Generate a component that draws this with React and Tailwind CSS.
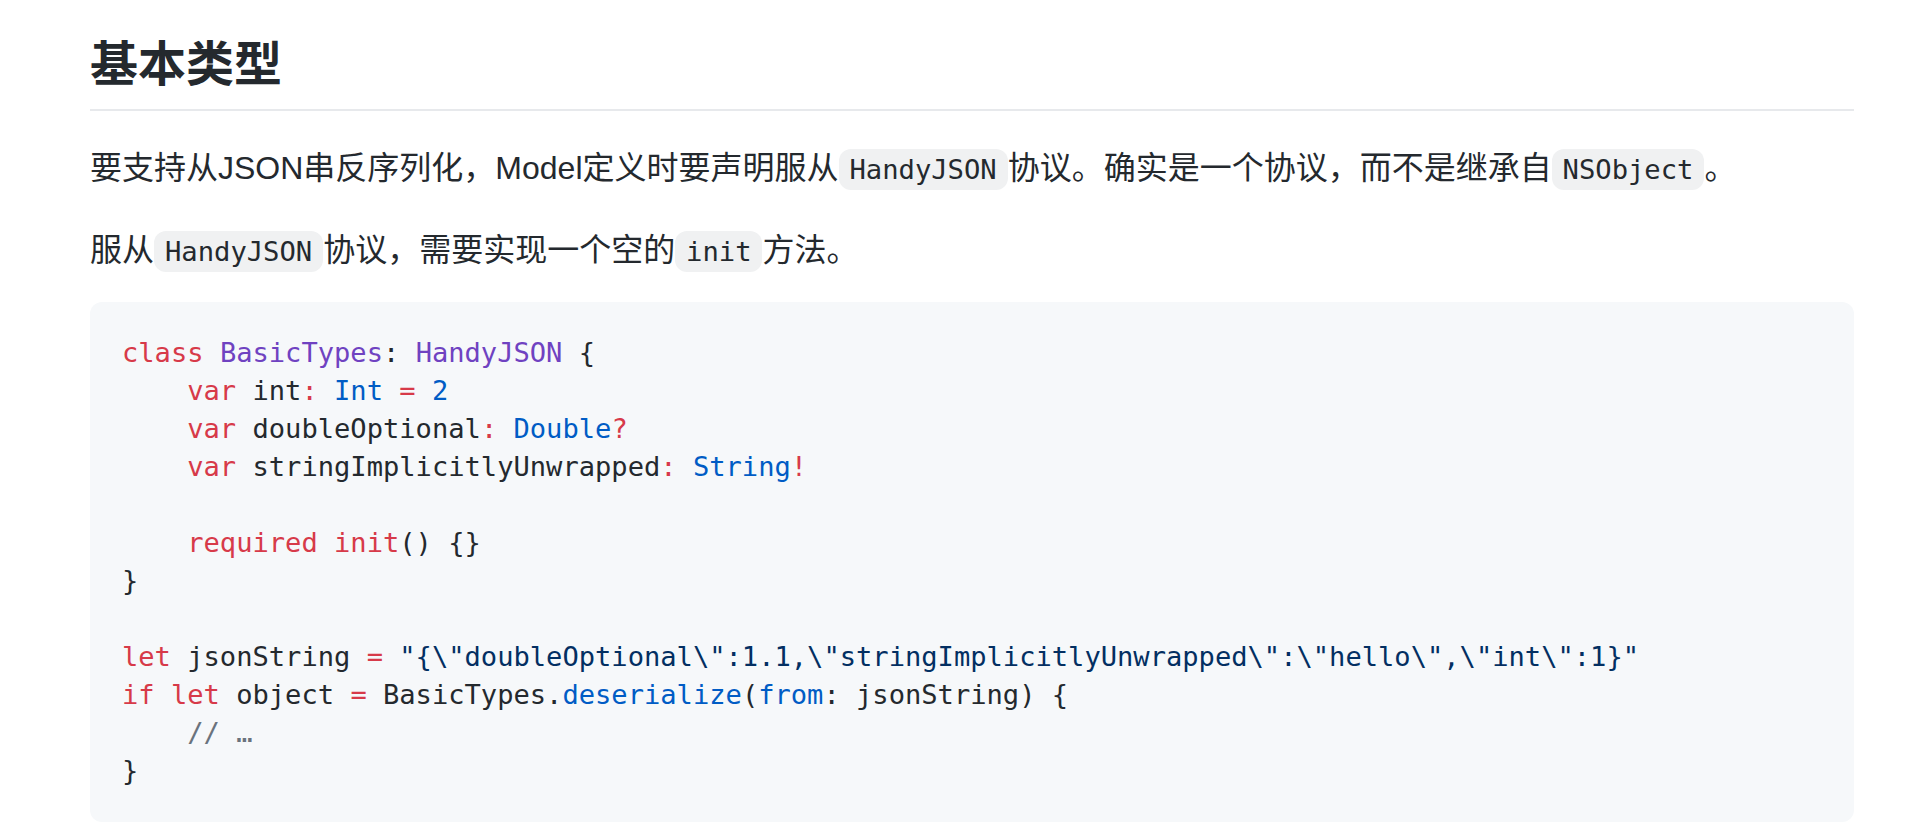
import React from "react";

const R = ({ children }) => <span className="text-[#d73a49]">{children}</span>;
const P = ({ children }) => <span className="text-[#6f42c1]">{children}</span>;
const B = ({ children }) => <span className="text-[#005cc5]">{children}</span>;
const S = ({ children }) => <span className="text-[#032f62]">{children}</span>;
const G = ({ children }) => <span className="text-[#6a737d]">{children}</span>;

const Code = ({ children }) => (
  <code
    className="bg-[#f0f1f2] rounded-[12px] px-[10.9px] py-[5.4px] text-[27.2px] leading-none text-[#24292e]"
    style={{ fontFamily: '"DejaVu Sans Mono", monospace' }}
  >
    {children}
  </code>
);

export default function App() {
  const json = '"{\\"doubleOptional\\":1.1,\\"stringImplicitlyUnwrapped\\":\\"hello\\",\\"int\\":1}"';
  return (
    <div
      className="w-[1924px] h-[840px] bg-white overflow-hidden text-[#24292e]"
      style={{ fontFamily: '"Liberation Sans", "Noto Sans CJK SC", sans-serif' }}
    >
      <div className="ml-[90px] w-[1764px] pt-[35px]">
        <h2 className="text-[48px] font-semibold leading-[60px] pb-[14px] border-b-2 border-[#e7e9ec]">
          基本类型
        </h2>
        <p className="mt-[33px] text-[32px] leading-[48px]">
          要支持从JSON串反序列化，Model定义时要声明服从<Code>HandyJSON</Code>协议。确实是一个协议，而不是继承自<Code>NSObject</Code>。
        </p>
        <p className="mt-[34px] text-[32px] leading-[48px]">
          服从<Code>HandyJSON</Code>协议，需要实现一个空的<Code>init</Code>方法。
        </p>
        <pre
          className="mt-[28px] bg-[#f6f8fa] rounded-[12px] p-[32px] text-[27.1px] leading-[38px] text-[#24292e] whitespace-pre"
          style={{ fontFamily: '"DejaVu Sans Mono", monospace' }}
        >
          <div><R>class</R> <P>BasicTypes</P>: <P>HandyJSON</P> {"{"}</div>
          <div>{"    "}<R>var</R> int<R>:</R> <B>Int</B> <R>=</R> <B>2</B></div>
          <div>{"    "}<R>var</R> doubleOptional<R>:</R> <B>Double</B><R>?</R></div>
          <div>{"    "}<R>var</R> stringImplicitlyUnwrapped<R>:</R> <B>String</B><R>!</R></div>
          <div>{" "}</div>
          <div>{"    "}<R>required</R> <R>init</R>() {"{}"}</div>
          <div>{"}"}</div>
          <div>{" "}</div>
          <div><R>let</R> jsonString <R>=</R> <S>{json}</S></div>
          <div><R>if</R> <R>let</R> object <R>=</R> BasicTypes.<B>deserialize</B>(<B>from</B>: jsonString) {"{"}</div>
          <div>{"    "}<G>// …</G></div>
          <div>{"}"}</div>
        </pre>
      </div>
    </div>
  );
}
